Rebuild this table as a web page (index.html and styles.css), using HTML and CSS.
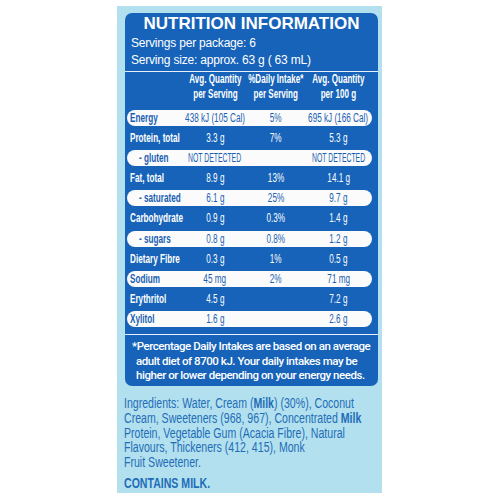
FILE: index.html
```html
<!DOCTYPE html>
<html>
<head>
<meta charset="utf-8">
<link rel="stylesheet" href="styles.css">
</head>
<body>
<div class="panel">
  <div class="box">
    <div class="title">NUTRITION INFORMATION</div>
    <div class="servings">
      <div>Servings per package: 6</div>
      <div>Serving size: approx. 63 g ( 63 mL)</div>
    </div>
    <div class="rule"></div>
    <div class="head">
      <div></div>
      <div class="c"><span>Avg. Quantity<br>per Serving</span></div>
      <div class="c"><span>%Daily Intake*<br>per Serving</span></div>
      <div class="c"><span>Avg. Quantity<br>per 100 g</span></div>
    </div>
    <div class="rows">
      <div class="row pill"><div class="lab"><span>Energy</span></div><div class="c"><span>438 kJ (105 Cal)</span></div><div class="c"><span>5%</span></div><div class="c"><span>695 kJ (166 Cal)</span></div></div>
      <div class="row"><div class="lab"><span>Protein, total</span></div><div class="c"><span>3.3 g</span></div><div class="c"><span>7%</span></div><div class="c"><span>5.3 g</span></div></div>
      <div class="row pill"><div class="lab sub"><span>- gluten</span></div><div class="c"><span class="caps">NOT DETECTED</span></div><div class="c"></div><div class="c"><span class="caps">NOT DETECTED</span></div></div>
      <div class="row"><div class="lab"><span>Fat, total</span></div><div class="c"><span>8.9 g</span></div><div class="c"><span>13%</span></div><div class="c"><span>14.1 g</span></div></div>
      <div class="row pill"><div class="lab sub"><span>- saturated</span></div><div class="c"><span>6.1 g</span></div><div class="c"><span>25%</span></div><div class="c"><span>9.7 g</span></div></div>
      <div class="row"><div class="lab"><span>Carbohydrate</span></div><div class="c"><span>0.9 g</span></div><div class="c"><span>0.3%</span></div><div class="c"><span>1.4 g</span></div></div>
      <div class="row pill"><div class="lab sub"><span>- sugars</span></div><div class="c"><span>0.8 g</span></div><div class="c"><span>0.8%</span></div><div class="c"><span>1.2 g</span></div></div>
      <div class="row"><div class="lab"><span>Dietary Fibre</span></div><div class="c"><span>0.3 g</span></div><div class="c"><span>1%</span></div><div class="c"><span>0.5 g</span></div></div>
      <div class="row pill"><div class="lab"><span>Sodium</span></div><div class="c"><span>45 mg</span></div><div class="c"><span>2%</span></div><div class="c"><span>71 mg</span></div></div>
      <div class="row"><div class="lab"><span>Erythritol</span></div><div class="c"><span>4.5 g</span></div><div class="c"></div><div class="c"><span>7.2 g</span></div></div>
      <div class="row pill"><div class="lab"><span>Xylitol</span></div><div class="c"><span>1.6 g</span></div><div class="c"></div><div class="c"><span>2.6 g</span></div></div>
    </div>
    <div class="rule rule2"></div>
    <div class="note">*Percentage Daily Intakes are based on an average<br>adult diet of 8700 kJ. Your daily intakes may be<br>higher or lower depending on your energy needs.</div>
  </div>
  <div class="ingr">Ingredients: Water, Cream (<b>Milk</b>) (30%), Coconut<br>Cream, Sweeteners (968, 967), Concentrated <b>Milk</b><br>Protein, Vegetable Gum (Acacia Fibre), Natural<br>Flavours, Thickeners (412, 415), Monk<br>Fruit Sweetener.</div>
  <div class="contains">CONTAINS MILK.</div>
</div>
</body>
</html>
```

FILE: styles.css
```css
html, body {
  margin: 0;
  padding: 0;
  background: #ffffff;
}
body {
  width: 500px;
  height: 500px;
  overflow: hidden;
}
.panel {
  margin: 6px 0 0 117px;
  width: 265px;
  height: 487px;
  box-sizing: border-box;
  background: #b2e0ee;
  padding: 7px 4px 0 8px;
}
.box {
  height: 373px;
  box-sizing: border-box;
  background: #1663b9;
  border-radius: 7px;
  color: #ffffff;
  overflow: hidden;
}
.title {
  margin-top: 1px;
  font-family: "Liberation Sans", Arial, sans-serif;
  font-weight: bold;
  font-size: 17px;
  line-height: 20px;
  text-align: center;
}
.servings {
  margin-top: 1.3px;
  padding-left: 6px;
  font-family: "Liberation Sans", Arial, sans-serif;
  font-size: 12px;
  line-height: 16.5px;
  letter-spacing: -0.2px;
}
.rule {
  margin-top: 2.7px;
  height: 1px;
  background: #e8eef8;
}
.head, .row {
  display: grid;
  grid-template-columns: 56px 64px 58px 67px;
  margin: 0 6px 0 2px;
  font-family: "Liberation Sans", Arial, sans-serif;
}
.head {
  font-weight: bold;
  font-size: 12.5px;
  line-height: 15px;
}
.c {
  display: flex;
  justify-content: center;
  white-space: nowrap;
  min-width: 0;
}
.c span {
  display: inline-block;
  flex: none;
  text-align: center;
  transform: scaleX(0.68);
}
.head .c span {
  transform: scaleX(0.645);
}
.c span.caps {
  transform: scaleX(0.57);
}
.rows {
  margin-top: 8px;
  display: grid;
  grid-auto-rows: 16px;
  row-gap: 4.1px;
}
.row {
  font-size: 12px;
  line-height: 16px;
  border-radius: 8px;
}
.pill {
  background: #fbfbfb;
  color: #1a5fb2;
}
.lab {
  padding-left: 3px;
  font-weight: bold;
  white-space: nowrap;
  min-width: 0;
}
.lab span {
  display: inline-block;
  transform: scaleX(0.68);
  transform-origin: left center;
}
.lab.sub {
  padding-left: 12px;
}
.rule2 {
  margin-top: 7px;
}
.note {
  margin-top: 3.8px;
  padding-left: 11px;
  text-indent: -4px;
  font-family: Roboto, "Liberation Sans", sans-serif;
  font-weight: 500;
  font-size: 11.5px;
  line-height: 14.8px;
  letter-spacing: -0.45px;
  white-space: nowrap;
}
.ingr, .contains {
  margin-left: -1px;
  font-family: "Liberation Sans", Arial, sans-serif;
  font-size: 14px;
  line-height: 14.8px;
  color: #1f6db8;
  white-space: nowrap;
  transform: scaleX(0.755);
  transform-origin: left center;
}
.ingr {
  margin-top: 10px;
}
.contains {
  margin-top: 5.8px;
  font-weight: bold;
}
```
